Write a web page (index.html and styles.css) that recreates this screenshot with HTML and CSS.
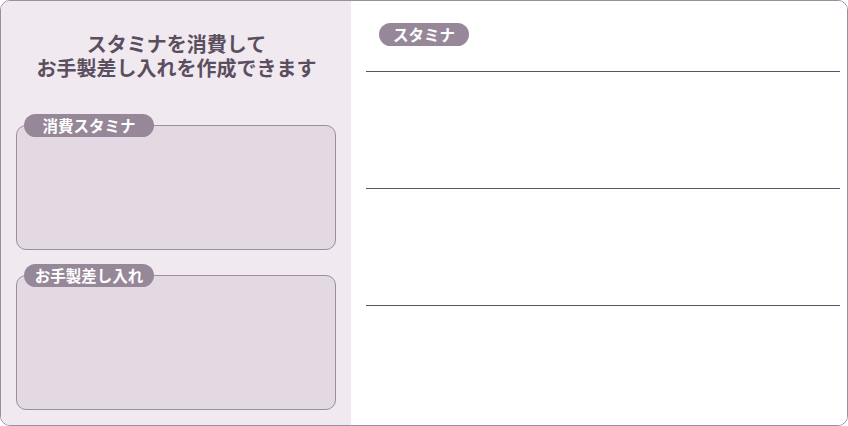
FILE: index.html
```html
<!DOCTYPE html>
<html lang="ja">
<head>
<meta charset="utf-8">
<link rel="stylesheet" href="styles.css">
</head>
<body>
<div class="frame">
  <div class="left">
    <div class="title">スタミナを消費して<br>お手製差し入れを作成できます</div>
    <div class="box box-stamina">
      <div class="label">消費スタミナ</div>
    </div>
    <div class="box box-gift">
      <div class="label">お手製差し入れ</div>
    </div>
  </div>
  <div class="right">
    <div class="head"><span class="pill">スタミナ</span></div>
    <div class="rule"></div>
    <div class="section"></div>
    <div class="rule"></div>
    <div class="section"></div>
    <div class="rule"></div>
  </div>
</div>
</body>
</html>
```

FILE: styles.css
```css
html, body {
  margin: 0;
  padding: 0;
  background: #ffffff;
}
body {
  font-family: "Noto Sans CJK JP", "Noto Sans", sans-serif;
}
.frame {
  width: 848px;
  height: 426px;
  box-sizing: border-box;
  border: 1px solid #9c8da0;
  border-radius: 10px;
  overflow: hidden;
  display: flex;
}
.left {
  width: 350px;
  flex: none;
  background: #f0e9f0;
  box-sizing: border-box;
  padding-top: 31px;
  display: flex;
  flex-direction: column;
  align-items: flex-start;
}
.title {
  align-self: stretch;
  text-align: center;
  font-size: 20px;
  line-height: 24px;
  font-weight: 700;
  color: #5b4f5f;
  padding-left: 1px;
}
.box {
  position: relative;
  margin-left: 15px;
  width: 320px;
  box-sizing: border-box;
  background: #e3d9e3;
  border: 1px solid #9c8da0;
  border-radius: 10px;
}
.box-stamina {
  margin-top: 45px;
  height: 125px;
}
.box-gift {
  margin-top: 25px;
  height: 135px;
}
.label {
  position: absolute;
  left: 7px;
  top: -12px;
  width: 130px;
  height: 23px;
  border-radius: 12px;
  background: #978899;
  color: #ffffff;
  font-size: 15.5px;
  font-weight: 700;
  line-height: 23px;
  text-align: center;
}
.right {
  flex: 1;
  background: #ffffff;
  padding: 0 7px 0 15px;
  display: flex;
  flex-direction: column;
}
.head {
  height: 70px;
  box-sizing: border-box;
  padding: 21px 0 0 13px;
}
.pill {
  display: inline-block;
  width: 90px;
  height: 23px;
  border-radius: 12px;
  background: #978899;
  color: #ffffff;
  font-size: 15.5px;
  font-weight: 700;
  line-height: 23px;
  text-align: center;
}
.rule {
  height: 1px;
  background: #5f5363;
}
.section {
  height: 116px;
}
```
